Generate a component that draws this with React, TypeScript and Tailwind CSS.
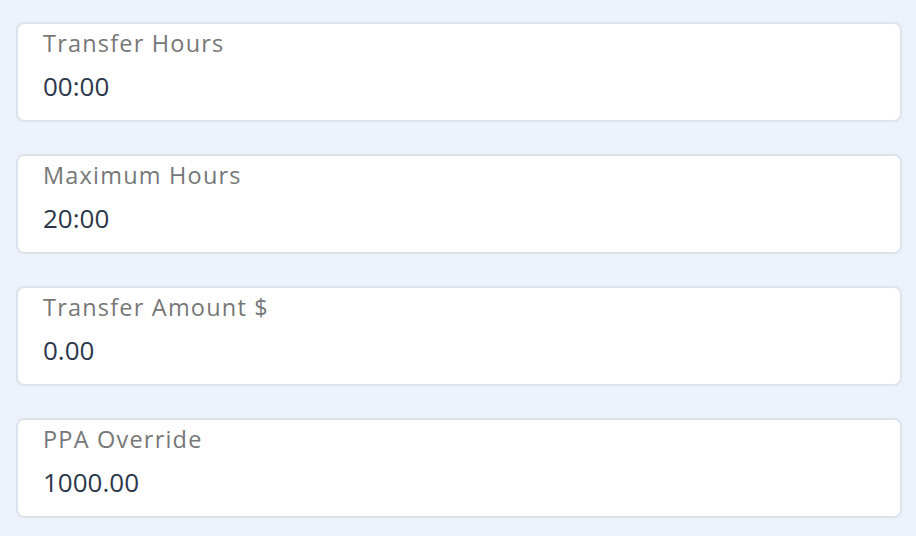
const fields = [
  { label: 'Transfer Hours', value: '00:00' },
  { label: 'Maximum Hours', value: '20:00' },
  { label: 'Transfer Amount $', value: '0.00' },
  { label: 'PPA Override', value: '1000.00' },
]

export default function App() {
  return (
    <div className="flex h-[536px] w-[916px] flex-col gap-[32px] bg-[#edf1f9] pl-[16px] pr-[14px] pt-[22px] font-['Open_Sans',sans-serif]">
      {fields.map((f) => (
        <div
          key={f.label}
          className="flex h-[100px] flex-col rounded-[8px] border-2 border-[#dbe3ef] bg-white pl-[25px] pt-[4px]"
        >
          <span className="text-[23.5px] font-medium leading-[30px] tracking-[1.2px] text-[#777777]">{f.label}</span>
          <span className="mt-[13px] text-[26px] leading-[30px] text-[#2c374b]">{f.value}</span>
        </div>
      ))}
    </div>
  )
}
